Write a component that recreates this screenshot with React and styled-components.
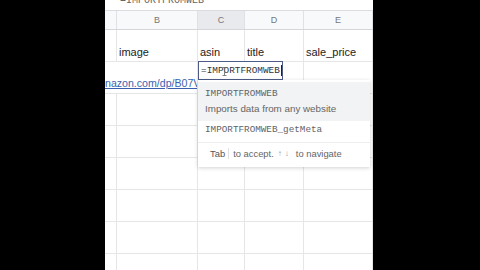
import React from "react";
import styled, { createGlobalStyle } from "styled-components";

const GlobalStyle = createGlobalStyle`
  html, body {
    margin: 0;
    background: #000;
  }
  body {
    font-family: "Liberation Sans", Arial, sans-serif;
  }
`;

const Frame = styled.div`
  display: flex;
  width: 480px;
  height: 270px;
  background: #000;
  overflow: hidden;
`;

const Bar = styled.div`
  flex: 0 0 ${(p) => p.w}px;
  background: #000;
`;

const Sheet = styled.div`
  position: relative;
  flex: 0 0 268px;
  height: 270px;
  background: #fff;
  overflow: hidden;
`;

// only the lower half of the formula text shows in the frame
const FormulaBar = styled.div`
  box-sizing: border-box;
  height: 11px;
  border-bottom: 1px solid #dadce0;
  display: flex;
  align-items: flex-end;
  padding: 0 0 4px 15px;
  overflow: hidden;
  font-family: "Liberation Mono", monospace;
  font-size: 10px;
  line-height: 10px;
  color: #666;
`;

const cols = "12px 81px 47px 59px 69px";

const HeaderRow = styled.div`
  display: grid;
  grid-template-columns: ${cols};
  height: 18px;
  border-bottom: 1px solid #d4d6d9;
`;

const HeadCell = styled.div`
  display: flex;
  align-items: center;
  justify-content: center;
  border-right: 1px solid #dfe1e4;
  background: ${(p) => (p.active ? "#e8eaed" : "#f8f9fa")};
  color: #777;
  font-size: 9px;
`;

const Grid = styled.div`
  display: grid;
  grid-template-columns: ${cols};
  grid-auto-rows: 32px;
`;

const Cell = styled.div`
  grid-column: span ${(p) => p.span || 1};
  display: flex;
  align-items: flex-end;
  padding: 0 2px 3px;
  border-right: 1px solid #e6e6e6;
  border-bottom: 1px solid #e6e6e6;
  font-size: 11px;
  color: #222;
  white-space: nowrap;
  overflow: hidden;
`;

const Link = styled.span`
  color: #3b5fb0;
  text-decoration: underline;
  font-size: 10.6px;
  margin-left: -2px;
  margin-bottom: 1px;
`;

const Editor = styled.div`
  position: absolute;
  left: 93px;
  top: 61px;
  width: 81px;
  height: 17px;
  border: 1px solid #4d5b86;
  background: #fff;
  display: flex;
  align-items: center;
  padding-left: 2px;
  font-family: "Liberation Mono", monospace;
  font-size: 9.4px;
  color: #333;
`;

const Caret = styled.span`
  display: inline-block;
  width: 1px;
  height: 11px;
  background: #222;
  margin-left: 1px;
`;

const Pointer = styled.svg`
  position: absolute;
  left: 117px;
  top: 67px;
`;

const Menu = styled.div`
  position: absolute;
  left: 93px;
  top: 80px;
  width: 172px;
  height: 87px;
  background: #fff;
  box-shadow: 0 1px 4px rgba(0, 0, 0, 0.18);
  display: flex;
  flex-direction: column;
  padding-top: 2px;
  box-sizing: border-box;
`;

const Option = styled.div`
  display: flex;
  flex-direction: column;
  gap: 4px;
  padding: ${(p) => (p.active ? "7px 7px 7px" : "4px 7px 5px")};
  background: ${(p) => (p.active ? "#f1f3f4" : "transparent")};
`;

const FnName = styled.div`
  font-family: "Liberation Mono", monospace;
  font-size: 9.3px;
  color: #5f6368;
  line-height: 10px;
`;

const FnDesc = styled.div`
  font-size: 9.8px;
  color: #666;
  line-height: 11px;
`;

const Footer = styled.div`
  margin-top: 2px;
  border-top: 1px solid #eceef0;
  display: flex;
  align-items: center;
  gap: 4px;
  padding: 5px 0 0 12px;
  font-size: 9.4px;
  color: #666;
`;

const Key = styled.span`
  padding-right: 3px;
  border-right: 1px solid #e0e0e0;
  color: #555;
`;

const Arrows = styled.span`
  font-size: 8px;
  color: #999;
  letter-spacing: 3px;
`;

const headers = ["", "B", "C", "D", "E"];

export default function App() {
  return (
    <>
      <GlobalStyle />
      <Frame>
        <Bar w={105} />
        <Sheet>
          <FormulaBar>=IMPORTFROMWEB</FormulaBar>
          <HeaderRow>
            {headers.map((h) => (
              <HeadCell key={h} active={h === "C"}>
                {h}
              </HeadCell>
            ))}
          </HeaderRow>
          <Grid>
            <Cell />
            <Cell>image</Cell>
            <Cell>asin</Cell>
            <Cell>title</Cell>
            <Cell>sale_price</Cell>

            <Cell span={2}>
              <Link>nazon.com/dp/B07VHZ41L8</Link>
            </Cell>
            <Cell />
            <Cell />
            <Cell />

            {Array.from({ length: 30 }).map((_, i) => (
              <Cell key={i} />
            ))}
          </Grid>

          <Editor>
            =IMPORTFROMWEB
            <Caret />
          </Editor>
          <Pointer width="5" height="9" viewBox="0 0 5 9">
            <path d="M0.5 0.5h4M2.5 0.5v8M0.5 8.5h4" stroke="#666" strokeWidth="0.8" fill="none" />
          </Pointer>

          <Menu>
            <Option active>
              <FnName>IMPORTFROMWEB</FnName>
              <FnDesc>Imports data from any website</FnDesc>
            </Option>
            <Option>
              <FnName>IMPORTFROMWEB_getMeta</FnName>
            </Option>
            <Footer>
              <Key>Tab</Key>
              <span>to accept.</span>
              <Arrows>↑↓</Arrows>
              <span>to navigate</span>
            </Footer>
          </Menu>
        </Sheet>
        <Bar w={107} />
      </Frame>
    </>
  );
}
